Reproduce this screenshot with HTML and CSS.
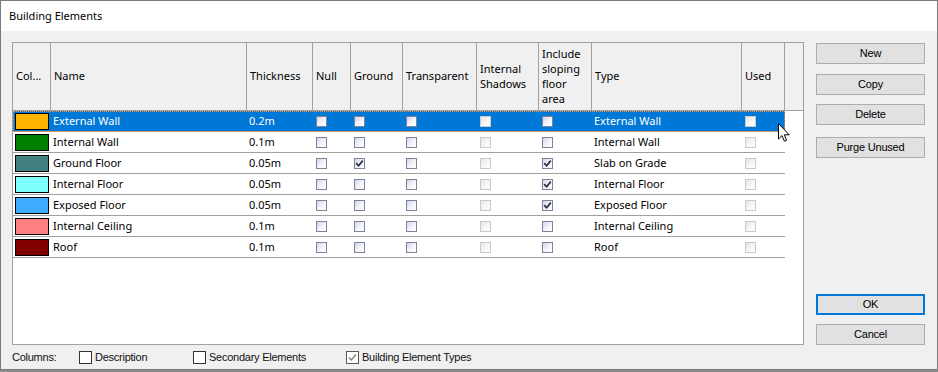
FILE: index.html
```html
<!DOCTYPE html>
<html lang="en">
  <head>
    <meta charset="UTF-8" />
    <meta name="viewport" content="width=device-width, initial-scale=1.0" />
    <title>Building Elements</title>
    <link rel="stylesheet" href="styles.css">
  </head>
  <body>
    <div class="window">
      <div class="titlebar">Building Elements</div>
      <div class="main">
        <div class="grid">
          <div class="head">
            <div class="hc">Col...</div>
            <div class="hc">Name</div>
            <div class="hc">Thickness</div>
            <div class="hc">Null</div>
            <div class="hc">Ground</div>
            <div class="hc">Transparent</div>
            <div class="hc">Internal<br>Shadows</div>
            <div class="hc">Include<br>sloping<br>floor<br>area</div>
            <div class="hc">Type</div>
            <div class="hc">Used</div>
            <div class="hc filler"></div>
          </div>

          <div class="row sel">
            <div class="c"><span class="swatch" style="background:#ffb400"></span></div>
            <div class="c txt">External Wall</div>
            <div class="c txt">0.2m</div>
            <div class="c"><span class="cb"></span></div>
            <div class="c"><span class="cb"></span></div>
            <div class="c"><span class="cb"></span></div>
            <div class="c"><span class="cb dis"></span></div>
            <div class="c"><span class="cb"></span></div>
            <div class="c txt">External Wall</div>
            <div class="c"><span class="cb dis"></span></div>
          </div>
          <div class="row">
            <div class="c"><span class="swatch" style="background:#008000"></span></div>
            <div class="c txt">Internal Wall</div>
            <div class="c txt">0.1m</div>
            <div class="c"><span class="cb"></span></div>
            <div class="c"><span class="cb"></span></div>
            <div class="c"><span class="cb"></span></div>
            <div class="c"><span class="cb dis"></span></div>
            <div class="c"><span class="cb"></span></div>
            <div class="c txt">Internal Wall</div>
            <div class="c"><span class="cb dis"></span></div>
          </div>
          <div class="row">
            <div class="c"><span class="swatch" style="background:#408080"></span></div>
            <div class="c txt">Ground Floor</div>
            <div class="c txt">0.05m</div>
            <div class="c"><span class="cb"></span></div>
            <div class="c"><span class="cb"><svg viewBox="0 0 9 9"><path d="M1.2 4.2 L3.6 6.8 L7.8 1.6"/></svg></span></div>
            <div class="c"><span class="cb"></span></div>
            <div class="c"><span class="cb dis"></span></div>
            <div class="c"><span class="cb"><svg viewBox="0 0 9 9"><path d="M1.2 4.2 L3.6 6.8 L7.8 1.6"/></svg></span></div>
            <div class="c txt">Slab on Grade</div>
            <div class="c"><span class="cb dis"></span></div>
          </div>
          <div class="row">
            <div class="c"><span class="swatch" style="background:#80ffff"></span></div>
            <div class="c txt">Internal Floor</div>
            <div class="c txt">0.05m</div>
            <div class="c"><span class="cb"></span></div>
            <div class="c"><span class="cb"></span></div>
            <div class="c"><span class="cb"></span></div>
            <div class="c"><span class="cb dis"></span></div>
            <div class="c"><span class="cb"><svg viewBox="0 0 9 9"><path d="M1.2 4.2 L3.6 6.8 L7.8 1.6"/></svg></span></div>
            <div class="c txt">Internal Floor</div>
            <div class="c"><span class="cb dis"></span></div>
          </div>
          <div class="row">
            <div class="c"><span class="swatch" style="background:#40acff"></span></div>
            <div class="c txt">Exposed Floor</div>
            <div class="c txt">0.05m</div>
            <div class="c"><span class="cb"></span></div>
            <div class="c"><span class="cb"></span></div>
            <div class="c"><span class="cb"></span></div>
            <div class="c"><span class="cb dis"></span></div>
            <div class="c"><span class="cb"><svg viewBox="0 0 9 9"><path d="M1.2 4.2 L3.6 6.8 L7.8 1.6"/></svg></span></div>
            <div class="c txt">Exposed Floor</div>
            <div class="c"><span class="cb dis"></span></div>
          </div>
          <div class="row">
            <div class="c"><span class="swatch" style="background:#ff8080"></span></div>
            <div class="c txt">Internal Ceiling</div>
            <div class="c txt">0.1m</div>
            <div class="c"><span class="cb"></span></div>
            <div class="c"><span class="cb"></span></div>
            <div class="c"><span class="cb"></span></div>
            <div class="c"><span class="cb dis"></span></div>
            <div class="c"><span class="cb"></span></div>
            <div class="c txt">Internal Ceiling</div>
            <div class="c"><span class="cb dis"></span></div>
          </div>
          <div class="row">
            <div class="c"><span class="swatch" style="background:#800000"></span></div>
            <div class="c txt">Roof</div>
            <div class="c txt">0.1m</div>
            <div class="c"><span class="cb"></span></div>
            <div class="c"><span class="cb"></span></div>
            <div class="c"><span class="cb"></span></div>
            <div class="c"><span class="cb dis"></span></div>
            <div class="c"><span class="cb"></span></div>
            <div class="c txt">Roof</div>
            <div class="c"><span class="cb dis"></span></div>
          </div>
        </div>

        <div class="actions">
          <div class="group">
            <div class="btn">New</div>
            <div class="btn copy">Copy</div>
            <div class="btn del">Delete</div>
            <div class="btn purge">Purge Unused</div>
          </div>
          <div class="group">
            <div class="btn default">OK</div>
            <div class="btn cancel">Cancel</div>
          </div>
        </div>
      </div>

      <div class="footer">
        <span class="lbl">Columns:</span>
        <label class="opt w1"><span class="box"></span>Description</label>
        <label class="opt w2"><span class="box"></span>Secondary Elements</label>
        <label class="opt"><span class="box on"><svg viewBox="0 0 11 11"><path d="M2 5.5 L4.3 8 L9 2.5"/></svg></span>Building Element Types</label>
      </div>

      <svg class="pointer" width="13" height="20" viewBox="0 0 13 20">
        <path d="M0.5 0.5 V16 L4 12.6 L6.4 18.2 L8.6 17.3 L6.3 11.8 H11.2 Z"/>
      </svg>
    </div>
  </body>
</html>
```

FILE: styles.css
```css
html,
body {
  margin: 0;
  padding: 0;
  background: #8c8c8c;
  height: 372px;
}

.window {
  position: relative;
  width: 938px;
  height: 370px;
  box-sizing: border-box;
  border: 1px solid #7a7a7a;
  background: #f0f0f0;
  display: flex;
  flex-direction: column;
  font-family: "Noto Sans", sans-serif;
  font-size: 11px;
  color: #000;
}

.titlebar {
  height: 30px;
  box-sizing: border-box;
  background: #fff;
  padding: 0 0 2px 8px;
  display: flex;
  align-items: center;
}

.main {
  display: flex;
  gap: 12px;
  padding: 11px 12px 0 11px;
}

/* grid */
.grid {
  width: 792px;
  height: 303px;
  box-sizing: border-box;
  border: 1px solid #a0a0a0;
  background: #fff;
}

.head,
.row {
  display: grid;
  grid-template-columns: 38px 196px 66px 38px 52px 74px 62px 53px 150px 43px;
}

.head {
  grid-template-columns: 38px 196px 66px 38px 52px 74px 62px 53px 150px 43px 1fr;
  height: 68px;
  box-sizing: border-box;
  background: #f0f0f0;
  border-bottom: 1px solid #a0a0a0;
}

.hc {
  display: flex;
  align-items: center;
  padding: 0 0 2px 3px;
  line-height: 15px;
  border-right: 1px solid #a0a0a0;
}

.hc.filler {
  border-right: none;
}

.row {
  width: 772px;
  height: 21px;
  box-sizing: border-box;
  border-bottom: 1px solid #a0a0a0;
}

.row.sel {
  background: #0078d7;
  color: #fff;
  outline: 1px dotted #f7953a;
  outline-offset: -1px;
}

.c {
  display: flex;
  align-items: center;
  padding-left: 3px;
  white-space: nowrap;
}

.c.txt {
  padding: 0 0 2px 2px;
}

.swatch {
  width: 34px;
  height: 17px;
  box-sizing: border-box;
  border: 1px solid #000;
  margin-left: -1px;
}

.cb {
  width: 11px;
  height: 11px;
  box-sizing: border-box;
  border: 1px solid #7b849a;
  background: linear-gradient(135deg, #d4d4ea 0%, #f4f4fb 55%, #fff 100%);
  display: flex;
}

.cb.dis {
  border-color: #c9c9c9;
  background: linear-gradient(135deg, #e6e6e6 0%, #f7f7f7 60%, #fff 100%);
}

.cb svg {
  width: 9px;
  height: 9px;
}

.cb path {
  fill: none;
  stroke: #2c2c44;
  stroke-width: 1.7;
}

/* buttons */
.actions {
  width: 109px;
  display: flex;
  flex-direction: column;
  justify-content: space-between;
  padding-top: 1px;
}

.btn {
  height: 21px;
  box-sizing: border-box;
  border: 1px solid #adadad;
  background: #e1e1e1;
  display: flex;
  align-items: center;
  justify-content: center;
  padding-bottom: 1px;
  font-family: "Liberation Sans", Arial, sans-serif;
  font-size: 11px;
  letter-spacing: -0.2px;
}

.btn.copy {
  margin-top: 10px;
}

.btn.del {
  margin-top: 9px;
}

.btn.purge {
  margin-top: 12px;
}

.btn.default {
  border: 2px solid #0078d7;
}

.btn.cancel {
  margin-top: 9px;
}

/* footer */
.footer {
  height: 24px;
  display: flex;
  align-items: center;
  padding-left: 11px;
  font-family: "Liberation Sans", Arial, sans-serif;
  font-size: 11px;
  letter-spacing: -0.25px;
  color: #111;
}

.lbl {
  width: 67px;
}

.opt {
  display: flex;
  align-items: center;
  gap: 3px;
}

.opt.w1 {
  width: 114px;
}

.opt.w2 {
  width: 153px;
}

.box {
  width: 13px;
  height: 13px;
  box-sizing: border-box;
  border: 1px solid #333;
  background: #fff;
  display: flex;
}

.box.on {
  border-color: #5a5a5a;
}

.box svg {
  width: 11px;
  height: 11px;
}

.box path {
  fill: none;
  stroke: #808080;
  stroke-width: 1.3;
}

.pointer {
  position: absolute;
  left: 777px;
  top: 122px;
}

.pointer path {
  fill: #fff;
  stroke: #000;
  stroke-width: 1;
}
```
